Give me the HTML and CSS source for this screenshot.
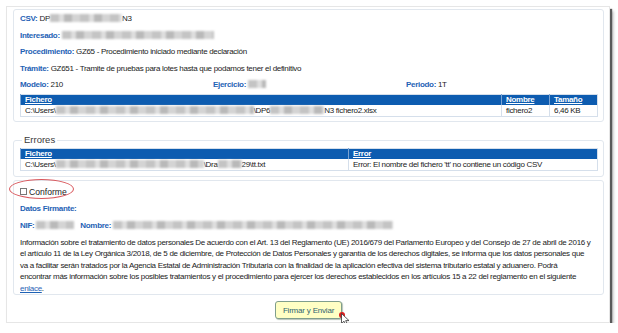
FILE: index.html
```html
<!DOCTYPE html>
<html lang="es">
<head>
    <meta charset="UTF-8">
    <title>Firma de ficheros</title>
    <link rel="stylesheet" href="styles.css">
</head>
<body>
    <div class="window">

        <!-- Datos del envio -->
        <div class="panel panel-data">
            <div class="row"><span class="lbl">CSV:</span> DP<span class="blur" style="width:72px"></span>N3</div>
            <div class="row"><span class="lbl">Interesado:</span> <span class="blur" style="width:152px"></span></div>
            <div class="row"><span class="lbl">Procedimiento:</span> GZ65 - Procedimiento iniciado mediante declaración</div>
            <div class="row"><span class="lbl">Trámite:</span> GZ651 - Tramite de pruebas para lotes hasta que podamos tener el definitivo</div>
            <div class="row cols">
                <div><span class="lbl">Modelo:</span> 210</div>
                <div><span class="lbl">Ejercicio:</span> <span class="blur" style="width:18px"></span></div>
                <div><span class="lbl">Periodo:</span> 1T</div>
            </div>

            <table class="grid grid-files">
                <tr>
                    <th><a>Fichero</a></th>
                    <th class="c-name"><a>Nombre</a></th>
                    <th class="c-size"><a>Tamaño</a></th>
                </tr>
                <tr>
                    <td>C:\Users\<span class="blur" style="width:198px"></span>\DP6<span class="blur" style="width:54px"></span>N3 fichero2.xlsx</td>
                    <td>fichero2</td>
                    <td>6,46 KB</td>
                </tr>
            </table>
        </div>

        <!-- Errores -->
        <fieldset class="panel panel-errors">
            <legend>Errores</legend>
            <table class="grid grid-errors">
                <tr>
                    <th class="c-file"><a>Fichero</a></th>
                    <th><a>Error</a></th>
                </tr>
                <tr>
                    <td>C:\Users\<span class="blur" style="width:148px"></span>\Dra<span class="blur" style="width:24px"></span>29\tt.txt</td>
                    <td>Error: El nombre del fichero 'tt' no contiene un código CSV</td>
                </tr>
            </table>
        </fieldset>

        <!-- Firma -->
        <div class="panel panel-sign">
            <label class="check"><span class="box"></span>Conforme</label>
            <div class="row"><span class="lbl">Datos Firmante:</span></div>
            <div class="row signer">
                <span><span class="lbl">NIF:</span> <span class="blur" style="width:38px"></span></span>
                <span><span class="lbl">Nombre:</span> <span class="blur" style="width:280px"></span></span>
            </div>
            <p class="legal">Información sobre el tratamiento de datos personales De acuerdo con el Art. 13 del Reglamento (UE) 2016/679 del Parlamento Europeo y del Consejo de 27 de abril de 2016 y<br>
                el artículo 11 de la Ley Orgánica 3/2018, de 5 de diciembre, de Protección de Datos Personales y garantía de los derechos digitales, se informa que los datos personales que<br>
                va a facilitar serán tratados por la Agencia Estatal de Administración Tributaria con la finalidad de la aplicación efectiva del sistema tributario estatal y aduanero. Podrá<br>
                encontrar más información sobre los posibles tratamientos y el procedimiento para ejercer los derechos establecidos en los artículos 15 a 22 del reglamento en el siguiente<br>
                <a href="#">enlace</a>.</p>
        </div>

        <div class="actions">
            <button class="send">Firmar y Enviar</button>
            <!-- cursor over the button -->
            <svg class="cursor" width="12" height="14" viewBox="0 0 12 14">
                <circle cx="3" cy="3" r="3" fill="#e02020"/>
                <path d="M2.5 1.5 L2.5 11.5 L5 9.2 L6.8 13 L8.4 12.3 L6.7 8.6 L10 8.6 Z" fill="#fff" stroke="#333" stroke-width="0.8"/>
            </svg>
        </div>

        <!-- annotation -->
        <span class="ring"></span>
    </div>
</body>
</html>
```

FILE: styles.css
```css
* {
    margin: 0;
    padding: 0;
    box-sizing: border-box;
}

body {
    font-family: "Liberation Sans", Arial, sans-serif;
    font-size: 8px;
    letter-spacing: -0.3px;
    color: #222;
    background: #fff;
}

.window {
    position: relative;
    width: 604px;
    height: 317px;
    margin: 6px 0 0 6px;
    padding: 2px 5px 0 6px;
    background: #fff;
    border: 1px solid #e6e6e6;
    box-shadow: 2px 3px 1px #5a5a5a, 3px 5px 3px #aaa;
}

.panel {
    border: 1px solid #e1e7ee;
    border-radius: 3px;
    padding: 3px 5px 4px 6px;
}

.row {
    line-height: 11px;
    height: 11px;
    margin-bottom: 5.5px;
    white-space: nowrap;
}

.lbl {
    color: #1f62b5;
    font-weight: bold;
}

.cols {
    display: grid;
    grid-template-columns: 193px 193px 1fr;
    margin-bottom: 4px;
}

.blur {
    display: inline-block;
    height: 8px;
    vertical-align: -1px;
    background: repeating-linear-gradient(90deg, #c4c4c4 0 9px, #dedede 9px 14px, #b9b9b9 14px 22px, #d4d4d4 22px 30px);
    filter: blur(1.2px);
}

.grid {
    width: 100%;
    border-collapse: collapse;
    border: 1px solid #d5dfeb;
}

.grid th {
    background: #0d5cb0;
    color: #fff;
    text-align: left;
    font-weight: bold;
    height: 10px;
    line-height: 9px;
    padding: 0 4px;
    border-left: 1px solid #7aa3d3;
}

.grid th a {
    text-decoration: underline;
}

.grid td {
    height: 12px;
    line-height: 11px;
    padding: 0 4px;
    border-left: 1px solid #d5dfeb;
    white-space: nowrap;
}

.c-name { width: 48px; }
.c-size { width: 48px; }
.c-file { width: 328px; }

.panel-errors {
    margin-top: 13px;
    padding: 3px 5px 5px 6px;
}

.panel-errors legend {
    font-size: 9.5px;
    letter-spacing: 0;
    color: #3a3a3a;
    padding: 0 2px;
    margin-left: 2px;
    line-height: 10px;
}

.panel-sign {
    margin-top: 3px;
    padding: 5px 5px 0 6px;
}

.check {
    display: flex;
    align-items: center;
    height: 11px;
    margin-bottom: 6px;
    color: #222;
    font-size: 8.6px;
    letter-spacing: 0;
}

.check .box {
    width: 7px;
    height: 7px;
    border: 1px solid #777;
    background: #fff;
    margin-right: 2px;
}

.signer {
    display: flex;
    gap: 6px;
    margin-bottom: 6px;
}

.legal {
    line-height: 11.6px;
    color: #222;
    white-space: nowrap;
}

.legal a {
    color: #1f62b5;
}

.actions {
    position: relative;
    display: flex;
    justify-content: center;
    padding-top: 6px;
}

.send {
    font-family: inherit;
    font-size: 8px;
    letter-spacing: -0.2px;
    color: #2f6470;
    background: #ffffc4;
    border: 1px solid #7f9e8c;
    border-radius: 3px;
    width: 67px;
    height: 18px;
    box-shadow: 1px 1px 1px #b8c4b8;
}

.cursor {
    position: absolute;
    left: 326px;
    top: 17px;
}

.ring {
    position: absolute;
    left: 2px;
    top: 172px;
    width: 65px;
    height: 20px;
    border: 1px solid #d9575c;
    border-radius: 50%;
}
```
